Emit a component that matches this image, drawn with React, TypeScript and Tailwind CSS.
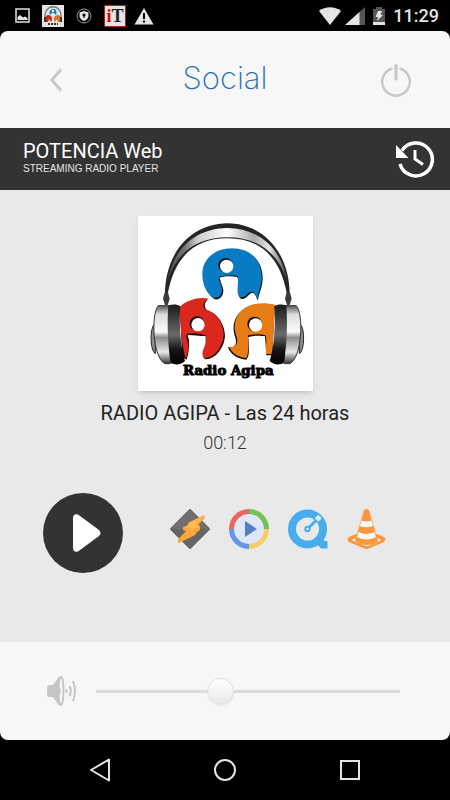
import { useState } from 'react'

function HeadphoneHalf() {
  return (
    <g>
      <path d="M75 340 C58 346 58 420 75 430 Z" fill="#8b8b8b" stroke="#222" strokeWidth="3" />
      <path d="M84 286 H120 V460 H104 C66 442 62 310 84 286 Z" fill="url(#silver)" stroke="#333" strokeWidth="3" />
      <path d="M114 286 C125 281 142 282 150 288 C146 340 150 410 164 452 C152 464 136 464 122 459 C112 410 110 330 114 286 Z" fill="url(#pad)" />
      <path d="M103 246 L113 246 L118 265 L112 284 L104 284 L98 265 Z" fill="#3a3a3a" />
    </g>
  )
}

function CoverArt() {
  return (
    <svg viewBox="23 17 525 525" className="size-[175px] bg-white shadow-md" role="img" aria-label="Radio Agipa">
      <defs>
        <linearGradient id="silver" x1="0" y1="0" x2="0" y2="1">
          <stop offset="0" stopColor="#555" />
          <stop offset="0.15" stopColor="#ddd" />
          <stop offset="0.45" stopColor="#fafafa" />
          <stop offset="0.55" stopColor="#8c8c8c" />
          <stop offset="0.8" stopColor="#e8e8e8" />
          <stop offset="1" stopColor="#333" />
        </linearGradient>
        <linearGradient id="pad" x1="0" y1="0" x2="0" y2="1">
          <stop offset="0" stopColor="#1a1a1a" />
          <stop offset="0.5" stopColor="#6a6a6a" />
          <stop offset="0.75" stopColor="#161616" />
          <stop offset="1" stopColor="#000" />
        </linearGradient>
        <linearGradient id="band" x1="0" y1="0" x2="1" y2="0">
          <stop offset="0" stopColor="#444" />
          <stop offset="0.15" stopColor="#777" />
          <stop offset="0.25" stopColor="#ccc" />
          <stop offset="0.5" stopColor="#fff" />
          <stop offset="0.72" stopColor="#aaa" />
          <stop offset="0.85" stopColor="#e6e6e6" />
          <stop offset="1" stopColor="#444" />
        </linearGradient>
      </defs>

      <path d="M104 252 C104 130 180 40 291 39 C402 40 478 130 478 252 L470 252 C450 140 390 84 291 84 C192 84 132 140 112 252 Z" fill="#242424" />
      <path d="M111 215 C128 110 200 54 291 53 C382 54 454 110 471 215 C444 126 382 81 291 81 C200 81 138 126 111 215 Z" fill="url(#band)" />

      <g>
        <path d="M253 267 C228 248 219 222 219 193 C219 148 258 117 308 117 C363 117 397 153 397 203 C397 233 385 248 383 271 C376 258 375 247 365 248 C352 252 348 268 333 266 C318 258 327 230 325 202 L271 203 C266 214 280 228 279 243 C278 259 267 270 253 267 Z" fill="#111" />
        <path d="M250 262 C225 245 216 220 216 190 C216 145 255 114 305 114 C360 114 394 150 394 200 C394 230 382 245 383 266 C374 254 372 243 362 244 C350 248 345 264 330 260 C316 254 324 225 323 197 C305 193 285 194 266 199 C262 210 276 225 275 240 C274 255 264 265 250 262 Z" fill="#087bc4" />
        <circle cx="286" cy="165" r="22" fill="#111" />
        <circle cx="289" cy="168" r="20" fill="#fff" />
        <path d="M267 202 C285 197 305 197 320 200 L321 208 H270 Z" fill="#fff" />
      </g>
      <g>
        <path d="M234 267 C222 276 220 288 229 299 C265 310 284 345 284 378 C281 413 257 446 226 447 C213 443 220 420 226 405 L226 378 L174 375 C178 395 176 430 169 448 L155 440 L150 300 Z" fill="#111" />
        <path d="M235 265 C219 272 216 286 224 297 C261 307 280 342 280 375 C277 410 254 442 225 443 C210 438 218 419 224 404 C229 392 229 382 225 375 C207 368 188 367 170 370 C164 379 173 389 173 402 C174 420 172 436 166 445 C155 407 148 340 148 290 C167 270 205 259 235 265 Z" fill="#db271e" />
        <circle cx="200" cy="340" r="22" fill="#111" />
        <circle cx="203" cy="343" r="20" fill="#fff" />
        <path d="M172 375 L223 378 L221 384 H174 Z" fill="#fff" />
      </g>
      <g>
        <path d="M433 287 C395 276 355 280 333 302 C310 322 304 352 315 382 C321 400 313 415 293 410 C299 432 324 447 348 448 C361 435 353 405 355 380 L404 378 L408 435 H426 Z" fill="#111" />
        <path d="M434 283 C398 274 358 278 336 299 C312 320 308 350 319 380 C325 399 315 413 297 409 C303 428 326 442 348 443 C357 427 352 400 353 375 C368 371 389 370 404 374 C412 382 405 404 407 431 H426 Z" fill="#e77c17" />
        <circle cx="373" cy="341" r="22" fill="#111" />
        <circle cx="376" cy="344" r="20" fill="#fff" />
        <path d="M355 380 C370 375 390 375 402 378 L403 386 H355 Z" fill="#fff" />
      </g>

      <HeadphoneHalf />
      <g transform="translate(582 0) scale(-1 1)">
        <HeadphoneHalf />
      </g>
      <text x="294" y="495" textAnchor="middle" fontSize="40" className="font-['DejaVu_Serif'] font-bold" fill="#000" stroke="#000" strokeWidth="3">
        Radio Agipa
      </text>
    </svg>
  )
}

function StatusBar() {
  return (
    <div className="flex h-[31px] items-center bg-black pr-[11px] pl-[15px] text-[#e4e4e4]">
      <div className="flex items-center">
        <svg viewBox="0 0 15 15" className="mr-3 size-[15px]" fill="none">
          <rect x="1" y="1" width="13" height="13" stroke="currentColor" strokeWidth="1.5" />
          <path d="M2.5 12 V9 L5 7 L8 9.5 L10 8.5 L12.5 10 V12 Z" fill="currentColor" />
        </svg>
        <svg viewBox="0 0 22 22" className="mr-3 size-[22px] bg-[#e4e4e4]" fill="none">
          <path d="M3 15 V10 C4 -1 18 -1 19 10 V15" stroke="#777" strokeWidth="1.3" />
          <path d="M8 10 C5 3 17 1 14 10 L12 8 H10 Z" fill="#087bc4" />
          <path d="M4 17 V11 C8 8 12 13 9 17 L7 14 L6 17 Z" fill="#c9281c" />
          <path d="M18 17 V11 C14 8 10 13 13 17 L15 14 L16 17 Z" fill="#d8741c" />
          <circle cx="11" cy="6" r="1.2" fill="#fff" />
          <path d="M3 12 V17 M19 12 V17" stroke="#333" strokeWidth="2" />
          <path d="M6 19 H16" stroke="#333" strokeWidth="2" strokeDasharray="2 1" />
        </svg>
        <svg viewBox="0 0 16 16" className="mr-3 size-4" fill="none">
          <circle cx="8" cy="8" r="7" stroke="#999" />
          <path d="M8 3 L12.500 4.500 V8 C12.500 10.500 10.500 12 8 13 C5.500 12 3.500 10.500 3.500 8 V4.500 Z" fill="currentColor" />
          <circle cx="8" cy="7" r="1.600" fill="#000" />
          <path d="M8 8 V10" stroke="#000" />
        </svg>
        <span className="mr-2 flex size-[22px] items-center justify-center border border-[#b02020] bg-[#e4e4e4] font-['Liberation_Serif',serif] text-lg leading-5 font-bold text-[#222]">
          <span className="text-[#e00000]">i</span>T
        </span>
        <svg viewBox="0 0 20 18" className="size-5">
          <path d="M10 1 L19.500 17.500 H0.500 Z" fill="currentColor" />
          <path d="M10 6 V12 M10 13.500 V15.500" stroke="#000" strokeWidth="2" />
        </svg>
      </div>
      <div className="ml-auto flex items-center">
        <svg viewBox="0 0 22 18" className="mr-1 h-[18px] w-[22px]">
          <path d="M11 18 L0 4 C6 -1 16 -1 22 4 Z" fill="currentColor" />
        </svg>
        <svg viewBox="0 0 20 18" className="mr-2 h-[18px] w-5">
          <path d="M20 0 V18 H0 Z" fill="#555" />
          <path d="M14.500 5 V18 H0 Z" fill="currentColor" />
        </svg>
        <svg viewBox="0 0 12 18" className="mr-2 h-[18px] w-3">
          <path d="M3 0 H9 V2 H12 V18 H0 V2 H3 Z" fill="#555" />
          <path d="M0 15 H12 V18 H0 Z" fill="currentColor" />
          <path d="M5 4 H9 L7.500 8 H10 L4 14 L5 10 H2.500 Z" fill="currentColor" />
        </svg>
        <span className="text-lg leading-5 font-medium">11:29</span>
      </div>
    </div>
  )
}

function WinampIcon() {
  return (
    <svg viewBox="0 0 40 40" className="size-10">
      <path d="M20 1 L39 20 L20 39 L1 20 Z" fill="#656565" stroke="#656565" strokeWidth="2" strokeLinejoin="round" />
      <path d="M20 1 L39 20 H1 Z" fill="#6f6f6f" />
      <path d="M34.500 6 L19 13.500 L17 17 L13 18 V21 L16 22 L8 30.500 V34.500 L25 26 L27 23 L30 21 V17 L28 16 L34.500 9.500 Z" fill="#f9a63a" />
      <path d="M34.500 6 L19 13.500 L17 17 L13 18 L22 19 L20 22 L30 17 L26 16 Z" fill="#ffb951" />
    </svg>
  )
}

function MediaPlayerIcon() {
  return (
    <svg viewBox="0 0 40 40" className="size-10">
      <path d="M20 20 V0 A20 20 0 0 0 0 20 Z" fill="#eb675d" />
      <path d="M20 20 H40 A20 20 0 0 0 20 0 Z" fill="#73c155" />
      <path d="M20 20 V40 A20 20 0 0 0 40 20 Z" fill="#f4ce67" />
      <path d="M20 20 H0 A20 20 0 0 0 20 40 Z" fill="#6198ec" />
      <circle cx="20" cy="20" r="15" fill="#dde7f8" />
      <path d="M16 12 L28 20 L16 28 Z" fill="#577fbf" />
    </svg>
  )
}

function QuickTimeIcon() {
  return (
    <svg viewBox="0 0 40 40" className="size-10" fill="none">
      <circle cx="19.500" cy="20" r="15.500" stroke="#48adec" strokeWidth="8" />
      <path d="M26 32 L34 30 L37 32 L39.500 32 V39.500 H33 Z" fill="#48adec" />
      <path d="M28.500 11 L32 7.500" stroke="#e9e9e9" strokeWidth="5" />
      <path d="M21 18.500 L28.500 11" stroke="#48adec" strokeWidth="3" />
      <circle cx="19.500" cy="20" r="2.200" stroke="#48adec" strokeWidth="2" />
    </svg>
  )
}

function VlcIcon() {
  return (
    <svg viewBox="0 0 40 40" className="size-10">
      <path d="M9 25 L2 28 Q-1 30.500 2 33 L16 39 Q19.500 41 23 39 L37 33 Q40 30.500 37 28 L30 25 Z" fill="#fb973d" />
      <path d="M8 29.500 L4.500 31 L18 37 H21 L34.500 31 L31 29.500 Z" fill="#f6f6f6" />
      <path d="M17 1 Q19.500 -1 22 1 L31 32 Q27 36 19.500 36 Q12 36 8 32 Z" fill="#fb973d" />
      <path d="M14.500 11.500 Q19.500 13.500 24.500 11.500 L26 17 Q19.500 19.500 13 17 Z M11.500 23 Q19.500 27 27.500 23 L29 28 Q19.500 33 10 28 Z" fill="#fafafa" />
    </svg>
  )
}

const PLAYERS = [
  { name: 'Winamp', Icon: WinampIcon },
  { name: 'Windows Media Player', Icon: MediaPlayerIcon },
  { name: 'QuickTime', Icon: QuickTimeIcon },
  { name: 'VLC', Icon: VlcIcon },
]

export default function App() {
  const [volume, setVolume] = useState(40)

  return (
    <div className="flex min-h-screen flex-col bg-black font-[Roboto,sans-serif]">
      <StatusBar />

      <div className="flex flex-1 flex-col overflow-hidden rounded-lg bg-[#f7f7f7]">
        <header className="grid h-[97px] grid-cols-[1fr_auto_1fr] items-center px-[38px]">
          <button type="button" aria-label="Back" className="ml-[9px] justify-self-start text-[#c8c8c8]">
            <svg viewBox="0 0 16 24" className="h-6 w-4" fill="none">
              <path d="M14 1.500 L5 12 L14 22.500" stroke="currentColor" strokeWidth="3" />
            </svg>
          </button>
          <h1 className="pb-1 font-[Inter,sans-serif] text-[31px] leading-9 font-extralight text-[#276fbb]">Social</h1>
          <button type="button" aria-label="Power" className="justify-self-end text-[#c8c8c8]">
            <svg viewBox="0 0 32 36" className="h-9 w-8" fill="none" stroke="currentColor">
              <path d="M12.500 6.500 A13.800 13.800 0 1 0 19.500 6.500" strokeWidth="2.500" />
              <path d="M16 3.500 V17" strokeWidth="3.200" strokeLinecap="round" />
            </svg>
          </button>
        </header>

        <div className="flex h-[62px] items-center justify-between bg-[#333] pr-[15px] pl-[23px] text-white">
          <div className="pb-1">
            <p className="text-xl leading-6">POTENCIA Web</p>
            <p className="font-['Liberation_Sans',sans-serif] text-[10px] leading-3 text-[#e4e4e4]">STREAMING RADIO PLAYER</p>
          </div>
          <button type="button" aria-label="History">
            <svg viewBox="0 0 40 38" className="h-[38px] w-10" fill="none" stroke="currentColor">
              <path d="M7 10.500 A16.500 16.500 0 1 1 5 24" strokeWidth="3.500" />
              <path d="M1 5 V18 H13.500 Z" fill="currentColor" stroke="none" />
              <path d="M20 10 V19 L28 24.500" strokeWidth="3" />
            </svg>
          </button>
        </div>

        <main className="flex flex-1 flex-col items-center bg-[#e9e9e9] pt-[26px]">
          <CoverArt />
          <h2 className="mt-2 text-xl leading-7 text-[#222]">RADIO AGIPA - Las 24 horas</h2>
          <p className="mt-1 text-lg leading-6 font-light text-[#333]">00:12</p>

          <div className="mt-[38px] flex w-full items-start justify-center gap-[47px] pr-5">
            <button type="button" aria-label="Play" className="flex size-20 items-center justify-center rounded-full bg-[#333] text-white">
              <svg viewBox="0 0 28 38" className="ml-2 h-[38px] w-7">
                <path d="M0 4 C0 0 4 -1 7 2 L26 16 Q29 19 26 22 L7 36 C4 39 0 38 0 34 Z" fill="currentColor" />
              </svg>
            </button>
            <div className="flex gap-[19px] pt-4">
              {PLAYERS.map(({ name, Icon }) => (
                <button type="button" key={name} aria-label={name}>
                  <Icon />
                </button>
              ))}
            </div>
          </div>
        </main>

        <footer className="flex h-[98px] items-center gap-[19px] pr-[50px] pl-[47px]">
          <svg viewBox="0 0 30 32" className="h-8 w-[30px] shrink-0 text-[#c5c5c5]" fill="none" stroke="currentColor">
            <path d="M3 10 H6 L11 3 Q13 0 14 2 V30 Q13 32 11 29 L6 22 H3 Q0 22 0 19 V13 Q0 10 3 10 Z" fill="currentColor" stroke="none" />
            <ellipse cx="14" cy="16" rx="2.500" ry="14" fill="#f7f7f7" strokeWidth="1.800" />
            <path d="M12 12 Q15 16 12 20 Z" fill="currentColor" />
            <path d="M19.500 14 V18 M22.500 11 Q25 16 22.500 21 M26 6 Q30 16 26 26" strokeWidth="2" />
          </svg>
          <input
            type="range"
            aria-label="Volume"
            min={0}
            max={100}
            value={volume}
            onChange={(e) => setVolume(Number(e.target.value))}
            className="h-7 min-w-0 flex-1 appearance-none bg-transparent [&::-webkit-slider-runnable-track]:h-[3px] [&::-webkit-slider-runnable-track]:bg-[#dcdcdc] [&::-webkit-slider-thumb]:-mt-3 [&::-webkit-slider-thumb]:size-[27px] [&::-webkit-slider-thumb]:appearance-none [&::-webkit-slider-thumb]:rounded-full [&::-webkit-slider-thumb]:border [&::-webkit-slider-thumb]:border-[#ddd] [&::-webkit-slider-thumb]:bg-linear-to-b [&::-webkit-slider-thumb]:from-white [&::-webkit-slider-thumb]:to-[#e9e9e9] [&::-webkit-slider-thumb]:shadow-xs"
          />
        </footer>
      </div>

      <nav className="flex h-[60px] items-center justify-around px-[38px] text-[#e4e4e4]">
        <button type="button" aria-label="Navigate back">
          <svg viewBox="0 0 24 24" className="size-6" fill="none" stroke="currentColor" strokeWidth="2">
            <path d="M21 1.500 V22.500 L3 12 Z" strokeLinejoin="round" />
          </svg>
        </button>
        <button type="button" aria-label="Home">
          <svg viewBox="0 0 24 24" className="size-6" fill="none" stroke="currentColor" strokeWidth="2">
            <circle cx="12" cy="12" r="10" />
          </svg>
        </button>
        <button type="button" aria-label="Recent apps">
          <svg viewBox="0 0 24 24" className="size-6" fill="none" stroke="currentColor" strokeWidth="2">
            <rect x="3" y="3" width="18" height="18" />
          </svg>
        </button>
      </nav>
    </div>
  )
}
